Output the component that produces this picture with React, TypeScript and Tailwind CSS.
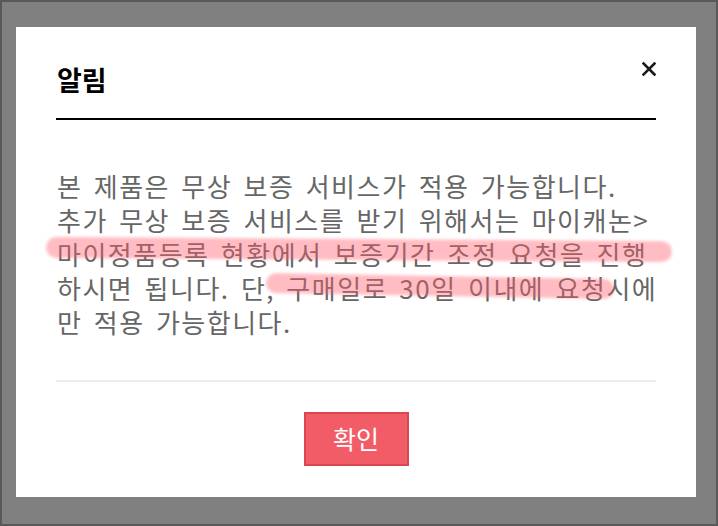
import React from "react";

const font = { fontFamily: '"Noto Sans CJK KR", "Noto Sans", sans-serif' };

export default function App() {
  const lines = [
    "본 제품은 무상 보증 서비스가 적용 가능합니다.",
    "추가 무상 보증 서비스를 받기 위해서는 마이캐논>",
    "마이정품등록 현황에서 보증기간 조정 요청을 진행",
    "하시면 됩니다. 단, 구매일로 30일 이내에 요청시에",
    "만 적용 가능합니다.",
  ];
  return (
    <div
      className="w-[718px] h-[526px] bg-[#808080] border-2 border-[#595959] pl-[14px] pt-[25px]"
      style={font}
    >
      <div className="w-[680px] h-[470px] bg-white px-[40px] flex flex-col">
        <div className="flex justify-between items-start border-b-2 border-black pt-[36px] pb-[22px]">
          <div className="text-[27px] leading-[33px] font-bold text-black pl-[1px]">알림</div>
          <svg width="14" height="14" viewBox="0 0 14 14" className="mt-[-1px]">
            <path d="M1.5 1.5 L12.5 12.5 M12.5 1.5 L1.5 12.5" stroke="#1a1a1a" strokeWidth="2.6" strokeLinecap="square" />
          </svg>
        </div>
        <div className="relative mt-[49px] text-[#666666] text-[26px] leading-[34px] tracking-[1.5px] [word-spacing:4px] pl-[1px]">
          {lines.map((l, i) => (
            <div key={i} className="whitespace-nowrap">{l}</div>
          ))}
          <span className="absolute left-[-10px] top-[70px] w-[626px] h-[21px] rounded-full bg-[rgba(255,90,106,0.4)] blur-[1.5px] rotate-[0.4deg]" />
          <span className="absolute left-[210px] top-[107px] w-[348px] h-[20px] rounded-full bg-[rgba(255,90,106,0.4)] blur-[1.5px] rotate-[1deg]" />
        </div>
        <div className="mt-[41px] h-[2px] bg-[#ececec]" />
        <div className="flex justify-center mt-[30px]">
          <div className="w-[105px] h-[54px] bg-[#f25c67] border-2 border-[#dc4653] text-white text-[25px] flex items-center justify-center">
            확인
          </div>
        </div>
      </div>
    </div>
  );
}
